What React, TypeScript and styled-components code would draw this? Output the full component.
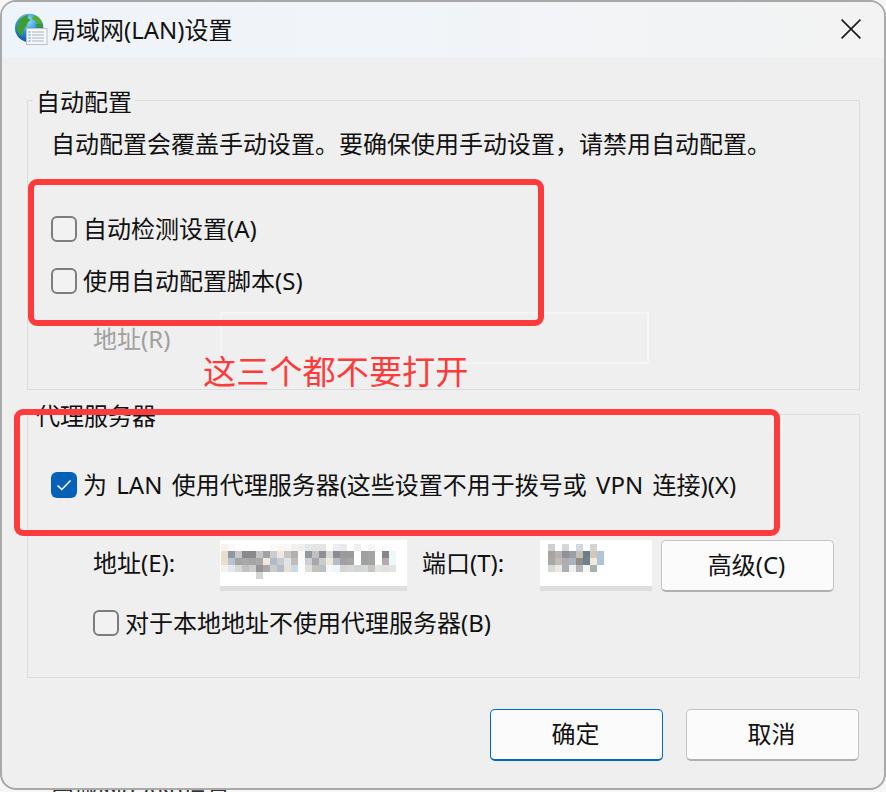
import React from 'react'
import styled, { createGlobalStyle } from 'styled-components'

const GlobalStyle = createGlobalStyle`
    html, body {
        margin: 0;
        padding: 0;
        background: #f6f6f6;
    }
    body {
        width: 886px;
        height: 792px;
        overflow: hidden;
        font-family: "Noto Sans", "Noto Sans CJK SC", sans-serif;
        color: #111111;
    }
`

const Dialog = styled.div`
    position: relative;
    box-sizing: border-box;
    width: 886px;
    height: 790px;
    display: flex;
    flex-direction: column;
    background: #efefef;
    border: 2px solid #a9a9a9;
    border-radius: 16px;
    overflow: hidden;
`

const TitleBar = styled.div`
    height: 56px;
    flex: none;
    display: flex;
    align-items: center;
    padding: 0 23px 0 13px;
    background: linear-gradient(90deg, #eff4fa 0%, #f1f4f8 45%, #f3f3f3 100%);
`

const TitleIcon = styled.svg`
    flex: none;
    margin-bottom: 2px;
`

const Title = styled.div`
    margin-left: 4px;
    font-size: 24px;
    line-height: 34px;
    flex: 1;
`

const CloseButton = styled.button`
    width: 20px;
    height: 20px;
    padding: 0;
    margin-bottom: 2px;
    border: 0;
    background: none;
    display: flex;
`

const Body = styled.div`
    flex: 1;
    padding: 26px 24px 0 25px;
    display: flex;
    flex-direction: column;
`

const Group = styled.fieldset<{ $bottom: number }>`
    margin: 0;
    min-width: 0;
    padding: 0 0 ${p => p.$bottom}px 0;
    border: 1px solid #dcdcdc;
    & + & {
        margin-top: 8px;
    }
`

const GroupTitle = styled.legend`
    margin-left: 5px;
    padding: 0 3px;
    font-size: 24px;
    line-height: 36px;
    height: 32px;
`

const Hint = styled.div`
    margin: 11px 0 0 23px;
    font-size: 24px;
    line-height: 34px;
    white-space: nowrap;
`

const CheckRow = styled.label<{ $top: number; $left?: number }>`
    display: flex;
    align-items: center;
    height: 34px;
    margin-top: ${p => p.$top}px;
    margin-left: ${p => p.$left ?? 23}px;
    font-size: 24px;
    white-space: nowrap;
`

const CheckText = styled.span<{ $wide?: boolean }>`
    padding-bottom: 4px;
    word-spacing: ${p => (p.$wide ? 3 : 0)}px;
`

const Box = styled.span<{ $checked?: boolean }>`
    box-sizing: border-box;
    flex: none;
    width: 26px;
    height: 26px;
    margin-right: 6px;
    border-radius: 6px;
    display: flex;
    align-items: center;
    justify-content: center;
    background: ${p => (p.$checked ? '#0560b8' : '#f2f2f2')};
    border: ${p => (p.$checked ? 'none' : '2px solid #7d7d7d')};
`

const FieldRow = styled.div<{ $top: number }>`
    display: flex;
    align-items: flex-start;
    height: 52px;
    margin-top: ${p => p.$top}px;
    margin-left: 65px;
`

const FieldLabel = styled.span<{ $width: number; $muted?: boolean; $gap?: number }>`
    width: ${p => p.$width}px;
    flex: none;
    margin-left: ${p => p.$gap ?? 0}px;
    font-size: 24px;
    line-height: ${p => (p.$muted ? 54 : 46)}px;
    white-space: nowrap;
    color: ${p => (p.$muted ? '#a0a0a0' : '#111111')};
`

const DisabledInput = styled.div`
    box-sizing: border-box;
    width: 429px;
    height: 52px;
    border: 2px solid #f5f5f5;
`

const BlurredInput = styled.div<{ $width: number }>`
    position: relative;
    box-sizing: border-box;
    flex: none;
    width: ${p => p.$width}px;
    height: 46px;
    background: #ffffff;
    box-shadow: 0 5px 0 #dedede;
    overflow: hidden;
`

const Mosaic = styled.svg`
    position: absolute;
    display: block;
    filter: blur(0.6px);
`

const PlainButton = styled.button<{ $primary?: boolean; $gap?: number }>`
    box-sizing: border-box;
    flex: none;
    width: 173px;
    height: 52px;
    margin-left: ${p => p.$gap ?? 0}px;
    padding: 0 2px 4px 0;
    background: #fbfbfb;
    border: 1px solid ${p => (p.$primary ? '#0067c0' : '#c4c4c4')};
    border-bottom: 2px solid ${p => (p.$primary ? '#0067c0' : '#b0b0b0')};
    border-radius: 5px;
    font-family: inherit;
    font-size: 24px;
    color: #111111;
`

const Footer = styled.div`
    display: flex;
    justify-content: flex-end;
    gap: 23px;
    margin-top: 31px;
    margin-right: 1px;
`

const RedFrame = styled.div<{ $x: number; $y: number; $w: number; $h: number }>`
    position: absolute;
    box-sizing: border-box;
    left: ${p => p.$x}px;
    top: ${p => p.$y}px;
    width: ${p => p.$w}px;
    height: ${p => p.$h}px;
    border: 6px solid #ff3b3b;
    border-radius: 9px;
    pointer-events: none;
`

const RedNote = styled.div`
    position: absolute;
    left: 201px;
    top: 348px;
    font-size: 33.2px;
    line-height: 44px;
    color: #ff3b3b;
    white-space: nowrap;
`

const PeekRow = styled.div`
    height: 2px;
    overflow: hidden;
    padding-left: 50px;
    font-size: 24px;
    line-height: 2px;
    color: #333;
    white-space: nowrap;
`

const ADDRESS_CELLS = [
    'f6f2ee,f8f8f8,ffffff,ffffff,ffffff,ffffff,ffffff,fafafa,faf6f2,f8f8fa,f4f0ee,f0eeec,e6e8e8,e4e4e0,e4e4e4,ffffff,ecedf0,e8eaee,ffffff,f0f0f0,ffffff,f4f4f4,ffffff,f8fcfc',
    'ecdccc,8f99a3,c8c8c8,8a8a8c,8a8a8c,c4c4c4,a0a4a8,cccccc,ece8e4,cac4be,b0b0b0,fafafa,94989e,c0c0c0,8c9094,d8d8d8,8c8c90,9a9a9a,9a9a9a,ffffff,a0a0a0,a4a4a4,ffffff,868686,eef8fa',
    'ecdccc,b4c4d0,a4a4a4,a8a8a8,a4a4a4,a8a8a8,f4e8d4,b0bcc8,c8ccd0,dce4ec,c0bcb8,fafafa,ccd0d4,a8a8a8,ccccc8,eee8de,b4bcc8,a0a0a0,a4a4a4,ffffff,a0a0a0,a4a4a4,ffffff,b8a8b0,eef8fa',
    'f4f0ec,e4e8ec,d8d8d8,c0c0c0,cccccc,949494,a8a8a8,c8cccc,b4bcc4,e8e0d4,ccd8e8,fcfcfc,e0e0e0,c4c0bc,b8c0c4,f8f8f8,f0f8fc,d4d4d4,d8d8d4,d0d4d4,d8d8d8,c8c4c0,e0e4e4,e0e0e0,e4e4e4',
    'ffffff,ffffff,ffffff,ffffff,ffffff,d4d4d4,ffffff,ffffff,ffffff,ffffff,ffffff,ffffff,ffffff,ffffff,ffffff,ffffff,ffffff,ffffff,ffffff,ffffff,ffffff,ffffff,ffffff,ffffff',
].map(row => row.split(','))

const PORT_CELLS = [
    'cfcfcf,ffffff,d5d8da,ffffff,d0d8dc,ffffff,d4d4d4,ffffff',
    'a8a4a2,b8b2ae,8e9298,9aa0a8,c8bfb4,6e7c88,d0c8bc,b4c4d4',
    'a8a8a8,c0bcb8,b0aeaa,a8b4c0,908c88,70808c,f2e8dc,b0c4d8',
    'd8d8dc,ece8e4,acb0b4,f0f0f0,b4b6ba,f4f4f0,acb0ac,ffffff',
].map(row => row.split(','))

function Pixels({ cells, left, top }: { cells: string[][]; left: number; top: number }) {
    const cols = Math.max(...cells.map(row => row.length))
    return (
        <Mosaic
            style={{ left, top }}
            width={cols * 7}
            height={cells.length * 7}
            viewBox={`0 0 ${cols * 7} ${cells.length * 7}`}
            shapeRendering="crispEdges"
        >
            {cells.map((row, y) =>
                row.map((color, x) => (
                    <rect key={`${x}-${y}`} x={x * 7} y={y * 7} width={7} height={7} fill={`#${color}`} />
                ))
            )}
        </Mosaic>
    )
}

function GlobeIcon() {
    return (
        <TitleIcon width="33" height="33" viewBox="0 0 33 33">
            <defs>
                <radialGradient id="sea" cx="0.45" cy="0.25" r="0.85">
                    <stop offset="0" stopColor="#9be2f8" />
                    <stop offset="0.45" stopColor="#2b94e2" />
                    <stop offset="1" stopColor="#0f3a94" />
                </radialGradient>
            </defs>
            <circle cx="14.2" cy="15" r="14.2" fill="url(#sea)" />
            <path d="M4.5 7c2-3 6-5 9-5l-1 3 3 2-3 3-1 3-3 3 0 4-2 3c-3-2-5-5-5-9l2-3-1-2z" fill="#3f9e33" />
            <path d="M19 2.5c4 1 7 4 8.500 7.500l-2 1-4-1-2-3-3-1z" fill="#55ad2c" />
            <path d="M21 11l6 0 1 3-3 1-4-1z" fill="#3f9630" />
            <rect x="11.500" y="15.500" width="20.500" height="16" fill="#f4f7fb" stroke="#b9c0c8" />
            <path d="M17 19h12M17 22h12M17 25h12M17 28h12" stroke="#a9b4c2" strokeWidth="1" />
            <path d="M13.500 19h2M13.500 22h2M13.500 25h2M13.500 28h2" stroke="#3f86c8" strokeWidth="1.2" />
        </TitleIcon>
    )
}

function CheckedMark() {
    return (
        <svg width="16" height="14" viewBox="0 0 16 14" fill="none">
            <path d="M1.5 7.5L5.8 11.5L14.5 2.5" stroke="#ffffff" strokeWidth="1.6" />
        </svg>
    )
}

export default function App() {
    return (
        <>
            <GlobalStyle />
            <Dialog>
                <TitleBar>
                    <GlobeIcon />
                    <Title>局域网(LAN)设置</Title>
                    <CloseButton aria-label="关闭">
                        <svg width="20" height="20" viewBox="0 0 20 20" fill="none">
                            <path d="M0.6 0.6L19.400 19.400M19.400 0.6L0.6 19.400" stroke="#1c1c1c" strokeWidth="1.7" />
                        </svg>
                    </CloseButton>
                </TitleBar>
                <Body>
                    <Group $bottom={25}>
                        <GroupTitle>自动配置</GroupTitle>
                        <Hint>自动配置会覆盖手动设置。要确保使用手动设置，请禁用自动配置。</Hint>
                        <CheckRow $top={51}>
                            <Box />
                            <CheckText>自动检测设置(A)</CheckText>
                        </CheckRow>
                        <CheckRow $top={18}>
                            <Box />
                            <CheckText>使用自动配置脚本(S)</CheckText>
                        </CheckRow>
                        <FieldRow $top={14}>
                            <FieldLabel $width={127} $muted>地址(R)</FieldLabel>
                            <DisabledInput />
                        </FieldRow>
                    </Group>
                    <Group $bottom={37}>
                        <GroupTitle>代理服务器</GroupTitle>
                        <CheckRow $top={38}>
                            <Box $checked>
                                <CheckedMark />
                            </Box>
                            <CheckText $wide>为 LAN 使用代理服务器(这些设置不用于拨号或 VPN 连接)(X)</CheckText>
                        </CheckRow>
                        <FieldRow $top={38}>
                            <FieldLabel $width={127}>地址(E):</FieldLabel>
                            <BlurredInput $width={187}>
                                <Pixels cells={ADDRESS_CELLS} left={1} top={4} />
                            </BlurredInput>
                            <FieldLabel $width={118} $gap={15}>端口(T):</FieldLabel>
                            <BlurredInput $width={112}>
                                <Pixels cells={PORT_CELLS} left={8} top={4} />
                            </BlurredInput>
                            <PlainButton $gap={9}>高级(C)</PlainButton>
                        </FieldRow>
                        <CheckRow $top={14} $left={65}>
                            <Box />
                            <CheckText>对于本地地址不使用代理服务器(B)</CheckText>
                        </CheckRow>
                    </Group>
                    <Footer>
                        <PlainButton $primary>确定</PlainButton>
                        <PlainButton>取消</PlainButton>
                    </Footer>
                </Body>
                <RedFrame $x={26} $y={177} $w={516} $h={147} />
                <RedFrame $x={12} $y={407} $w={766} $h={127} />
                <RedNote>这三个都不要打开</RedNote>
            </Dialog>
            <PeekRow>局域网(LAN)设置</PeekRow>
        </>
    )
}
